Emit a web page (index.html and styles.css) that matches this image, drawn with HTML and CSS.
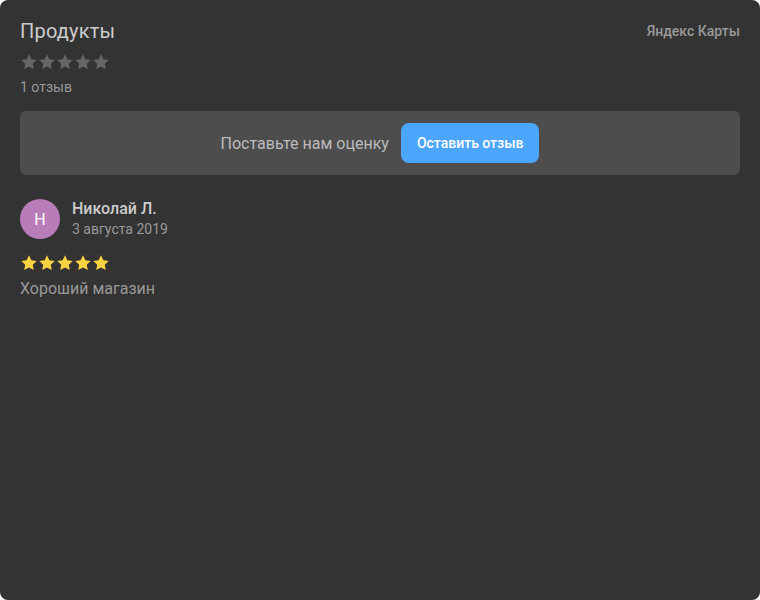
FILE: index.html
```html
<!DOCTYPE html>
<html lang="ru">
<head>
<meta charset="utf-8">
<link rel="stylesheet" href="styles.css">
</head>
<body>
<div class="widget">
  <header class="head">
    <div class="head-main">
      <h1 class="title">Продукты</h1>
      <div class="stars stars-gray">
        <svg viewBox="0 0 24 24"><path d="M12 1.8l3.1 6.6 7.2.9-5.3 5 1.4 7.1L12 17.9l-6.4 3.5 1.4-7.1-5.3-5 7.2-.9z"/></svg>
        <svg viewBox="0 0 24 24"><path d="M12 1.8l3.1 6.6 7.2.9-5.3 5 1.4 7.1L12 17.9l-6.4 3.5 1.4-7.1-5.3-5 7.2-.9z"/></svg>
        <svg viewBox="0 0 24 24"><path d="M12 1.8l3.1 6.6 7.2.9-5.3 5 1.4 7.1L12 17.9l-6.4 3.5 1.4-7.1-5.3-5 7.2-.9z"/></svg>
        <svg viewBox="0 0 24 24"><path d="M12 1.8l3.1 6.6 7.2.9-5.3 5 1.4 7.1L12 17.9l-6.4 3.5 1.4-7.1-5.3-5 7.2-.9z"/></svg>
        <svg viewBox="0 0 24 24"><path d="M12 1.8l3.1 6.6 7.2.9-5.3 5 1.4 7.1L12 17.9l-6.4 3.5 1.4-7.1-5.3-5 7.2-.9z"/></svg>
      </div>
      <div class="count">1 отзыв</div>
    </div>
    <div class="brand">Яндекс Карты</div>
  </header>
  <div class="banner">
    <span class="banner-text">Поставьте нам оценку</span>
    <button class="btn">Оставить отзыв</button>
  </div>
  <div class="review">
    <div class="author">
      <div class="avatar">Н</div>
      <div class="author-info">
        <div class="name">Николай Л.</div>
        <div class="date">3 августа 2019</div>
      </div>
    </div>
    <div class="stars stars-yellow">
      <svg viewBox="0 0 24 24"><path d="M12 1.8l3.1 6.6 7.2.9-5.3 5 1.4 7.1L12 17.9l-6.4 3.5 1.4-7.1-5.3-5 7.2-.9z"/></svg>
      <svg viewBox="0 0 24 24"><path d="M12 1.8l3.1 6.6 7.2.9-5.3 5 1.4 7.1L12 17.9l-6.4 3.5 1.4-7.1-5.3-5 7.2-.9z"/></svg>
      <svg viewBox="0 0 24 24"><path d="M12 1.8l3.1 6.6 7.2.9-5.3 5 1.4 7.1L12 17.9l-6.4 3.5 1.4-7.1-5.3-5 7.2-.9z"/></svg>
      <svg viewBox="0 0 24 24"><path d="M12 1.8l3.1 6.6 7.2.9-5.3 5 1.4 7.1L12 17.9l-6.4 3.5 1.4-7.1-5.3-5 7.2-.9z"/></svg>
      <svg viewBox="0 0 24 24"><path d="M12 1.8l3.1 6.6 7.2.9-5.3 5 1.4 7.1L12 17.9l-6.4 3.5 1.4-7.1-5.3-5 7.2-.9z"/></svg>
    </div>
    <div class="text">Хороший магазин</div>
  </div>
</div>
</body>
</html>
```
FILE: styles.css
```css
html, body {
  margin: 0;
  padding: 0;
  background: #fff;
}
body {
  font-family: Roboto, "Noto Sans", sans-serif;
}
.widget {
  width: 760px;
  height: 600px;
  box-sizing: border-box;
  background: #333;
  border-radius: 8px;
  padding: 18px 20px 20px;
  display: flex;
  flex-direction: column;
}
.head {
  display: flex;
  justify-content: space-between;
  align-items: flex-start;
}
.title {
  margin: 0;
  font-size: 20px;
  font-weight: 400;
  line-height: 26px;
  letter-spacing: 0.2px;
  color: #ccc;
}
.stars {
  display: flex;
}
.stars svg {
  width: 18px;
  height: 18px;
  display: block;
}
.stars-gray {
  margin-top: 9px;
  fill: #666;
}
.stars-yellow {
  fill: #ffd33f;
  margin-top: 15px;
}
.count {
  margin-top: 7px;
  font-size: 14px;
  line-height: 18px;
  color: #999;
}
.brand {
  margin-top: 5px;
  font-size: 14px;
  font-weight: 500;
  color: #999;
}
.banner {
  margin-top: 15px;
  height: 64px;
  background: #4d4d4d;
  border-radius: 6px;
  display: flex;
  align-items: center;
  justify-content: center;
  gap: 12px;
}
.banner-text {
  font-size: 16px;
  color: #bbb;
}
.btn {
  height: 40px;
  padding: 0 16px;
  border: none;
  border-radius: 8px;
  background: #4ca6ff;
  color: #fff;
  font-family: inherit;
  font-size: 14px;
  font-weight: 500;
}
.review {
  margin-top: 24px;
}
.author {
  display: flex;
  gap: 12px;
}
.avatar {
  width: 40px;
  height: 40px;
  border-radius: 50%;
  background: #b87cb8;
  color: #fff;
  font-size: 16px;
  display: flex;
  align-items: center;
  justify-content: center;
}
.author-info {
  display: flex;
  flex-direction: column;
}
.name {
  font-size: 16px;
  font-weight: 500;
  line-height: 20px;
  color: #ccc;
}
.date {
  margin-top: 1px;
  font-size: 14px;
  line-height: 18px;
  color: #999;
}
.text {
  margin-top: 7px;
  font-size: 16px;
  line-height: 20px;
  color: #999;
}
```
